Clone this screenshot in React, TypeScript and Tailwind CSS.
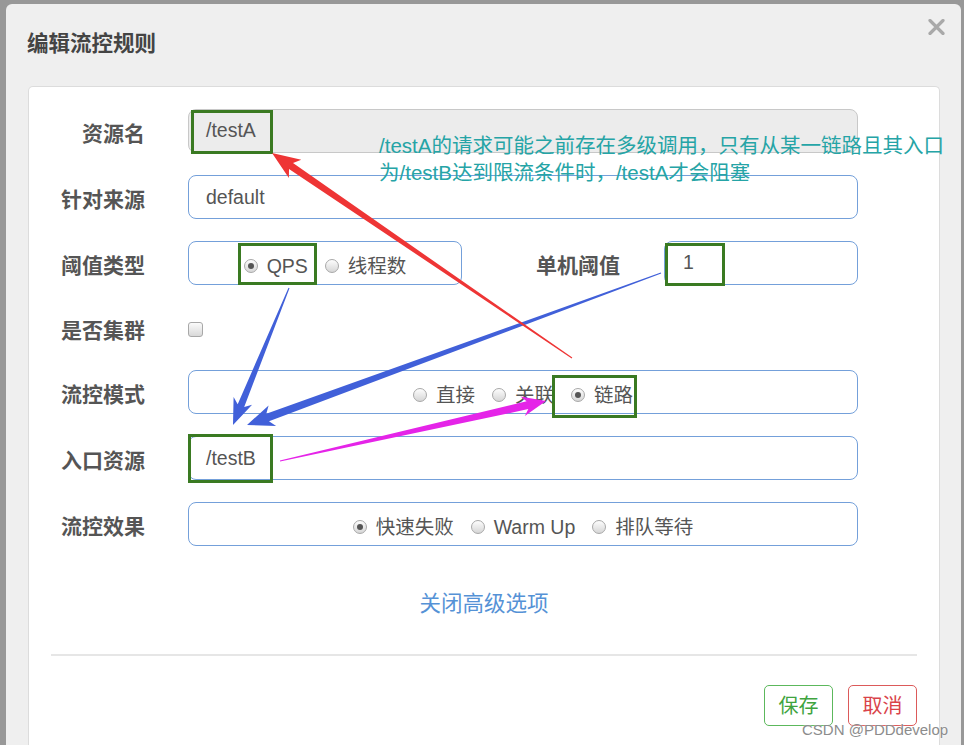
type Pt = [number, number];

const font = "font-['Liberation_Sans','Noto_Sans_CJK_SC',sans-serif]";

// tapered screenshot-tool arrow, computed from tail -> tip
function arrowPoints(tail: Pt, tip: Pt, w0: number, w1: number, headLen: number, headW: number) {
    const dx = tip[0] - tail[0];
    const dy = tip[1] - tail[1];
    const len = Math.hypot(dx, dy);
    const ux = dx / len;
    const uy = dy / len;
    const nx = -uy;
    const ny = ux;
    const bx = tip[0] - ux * headLen;
    const by = tip[1] - uy * headLen;
    const jx = bx + ux * 5;
    const jy = by + uy * 5;
    const pts: Pt[] = [
        [tail[0] + (nx * w0) / 2, tail[1] + (ny * w0) / 2],
        [jx + (nx * w1) / 2, jy + (ny * w1) / 2],
        [bx + (nx * headW) / 2, by + (ny * headW) / 2],
        tip,
        [bx - (nx * headW) / 2, by - (ny * headW) / 2],
        [jx - (nx * w1) / 2, jy - (ny * w1) / 2],
        [tail[0] - (nx * w0) / 2, tail[1] - (ny * w0) / 2],
    ];
    return pts.map((p) => `${p[0].toFixed(1)},${p[1].toFixed(1)}`).join(" ");
}

function Radio({ checked, label }: { checked?: boolean; label: string }) {
    return (
        <span className="flex items-center gap-[9px] pt-[5px]">
            <span className="flex h-[14px] w-[14px] items-center justify-center rounded-full border border-[#a8a8a8] bg-gradient-to-b from-[#fdfdfd] to-[#d6d6d6]">
                {checked && <span className="h-[6px] w-[6px] rounded-full bg-[#555]" />}
            </span>
            <span className="pt-[3px]">{label}</span>
        </span>
    );
}

function Row({ label, children, h = "h-[44px]" }: { label: string; children: React.ReactNode; h?: string }) {
    return (
        <div className={`flex items-center gap-[43px] ${h}`}>
            <div className="w-[116px] pt-[6px] text-right text-[21px] leading-[24px] font-bold text-[#555]">{label}</div>
            <div className="flex h-full flex-1 items-center">{children}</div>
        </div>
    );
}

const box = "flex h-[44px] items-center rounded-[8px] border text-[19.5px] text-[#555]";
const blue = "border-[#74a0da] bg-white";

function Overlay() {
    const green = "#3a7a22";
    return (
        <svg className="pointer-events-none absolute top-0 left-0" width={964} height={745}>
            <g fill="none" stroke={green} strokeWidth={3}>
                <rect x={192.5} y={111.5} width={79} height={41} />
                <rect x={239.5} y={244.5} width={76} height={39} />
                <rect x={666.5} y={244.5} width={57} height={40} />
                <rect x={553.5} y={376.5} width={82} height={40} />
                <rect x={189.5} y={435.5} width={82} height={46} />
            </g>
            <polygon fill="#4160d9" points={arrowPoints([289, 288], [233, 425], 1, 7, 26, 20)} />
            <polygon fill="#4160d9" points={arrowPoints([661, 273], [247, 425], 1, 8, 27, 22)} />
            <polygon fill="#ee3535" points={arrowPoints([572, 358], [272, 153], 1, 7, 28, 22)} />
            <polygon fill="#e524e8" points={arrowPoints([280, 461], [546, 401], 1, 8, 24, 20)} />
        </svg>
    );
}

export default function App() {
    return (
        <div className={`relative h-[745px] w-[964px] overflow-hidden bg-[#989898] pt-[4px] pl-[6px] ${font}`}>
            <div className="flex h-[741px] w-[955px] flex-col rounded-t-[6px] bg-[#efefef]">
                {/* header */}
                <div className="flex h-[82px] shrink-0 items-start justify-between">
                    <h4 className="pt-[28px] pl-[21px] text-[21.5px] leading-[24px] font-bold text-[#444]">编辑流控规则</h4>
                    <svg className="mt-[15px] mr-[16px]" width={17} height={16} viewBox="0 0 17 16">
                        <path d="M2 1.5 L15 14.5 M15 1.5 L2 14.5" stroke="#a9a9a9" strokeWidth={3.2} strokeLinecap="round" />
                    </svg>
                </div>

                {/* body panel */}
                <div className="mr-[21px] ml-[22px] flex flex-1 flex-col rounded-t-[5px] border border-b-0 border-[#dcdcdc] bg-white">
                    <div className="flex flex-col gap-[22px] pt-[22px] pr-[81px]">
                        <Row label="资源名">
                            <div className={`${box} w-full border-[#c8c8c8] bg-[#ececec] pl-[17px]`}>/testA</div>
                        </Row>
                        <Row label="针对来源">
                            <div className={`${box} ${blue} w-full pt-[2px] pl-[17px]`}>default</div>
                        </Row>
                        <Row label="阈值类型">
                            <div className={`${box} ${blue} w-[274px] shrink-0 justify-center gap-[17px]`}>
                                <Radio checked label="QPS" />
                                <Radio label="线程数" />
                            </div>
                            <div className="flex-1 pt-[6px] text-right text-[21px] leading-[24px] font-bold text-[#555]">单机阈值</div>
                            <div className={`${box} ${blue} ml-[44px] w-[194px] shrink-0 pl-[18px]`}>1</div>
                        </Row>
                        <Row label="是否集群" h="h-[41px]">
                            <span className="mt-[4px] h-[15px] w-[15px] rounded-[3px] border border-[#a8a8a8] bg-gradient-to-b from-[#fbfbfb] to-[#d9d9d9]" />
                        </Row>
                        <Row label="流控模式">
                            <div className={`${box} ${blue} w-full justify-center gap-[17px]`}>
                                <Radio label="直接" />
                                <Radio label="关联" />
                                <Radio checked label="链路" />
                            </div>
                        </Row>
                        <Row label="入口资源">
                            <div className={`${box} ${blue} w-full pt-[2px] pl-[17px]`}>/testB</div>
                        </Row>
                        <Row label="流控效果">
                            <div className={`${box} ${blue} w-full justify-center gap-[17px]`}>
                                <Radio checked label="快速失败" />
                                <Radio label="Warm Up" />
                                <Radio label="排队等待" />
                            </div>
                        </Row>
                    </div>

                    <div className="mt-[46px] text-center text-[21.5px] leading-[24px] text-[#5592d6]">关闭高级选项</div>

                    <div className="mx-[22px] mt-[38px] h-[2px] bg-[#e6e6e6]" />

                    <div className="mt-[29px] flex justify-end gap-[15px] pr-[22px]">
                        <button className="h-[41px] w-[69px] rounded-[5px] border border-[#5cb85c] text-[20px] text-[#3fa43f]">保存</button>
                        <button className="h-[41px] w-[69px] rounded-[5px] border border-[#dc5a5a] text-[20px] text-[#d9434a]">取消</button>
                    </div>
                </div>
            </div>

            <div className="absolute top-[132px] left-[379px] text-[20.5px] leading-[27px] text-[#25a4a6]">
                <div>/testA的请求可能之前存在多级调用，只有从某一链路且其入口</div>
                <div>为/testB达到限流条件时，/testA才会阻塞</div>
            </div>

            <Overlay />

            <div className="absolute top-[720px] left-[802px] text-[15px] leading-[20px] text-[#8c8c8c] [text-shadow:0_0_2px_#fff]">
                CSDN @PDDdevelop
            </div>
        </div>
    );
}
